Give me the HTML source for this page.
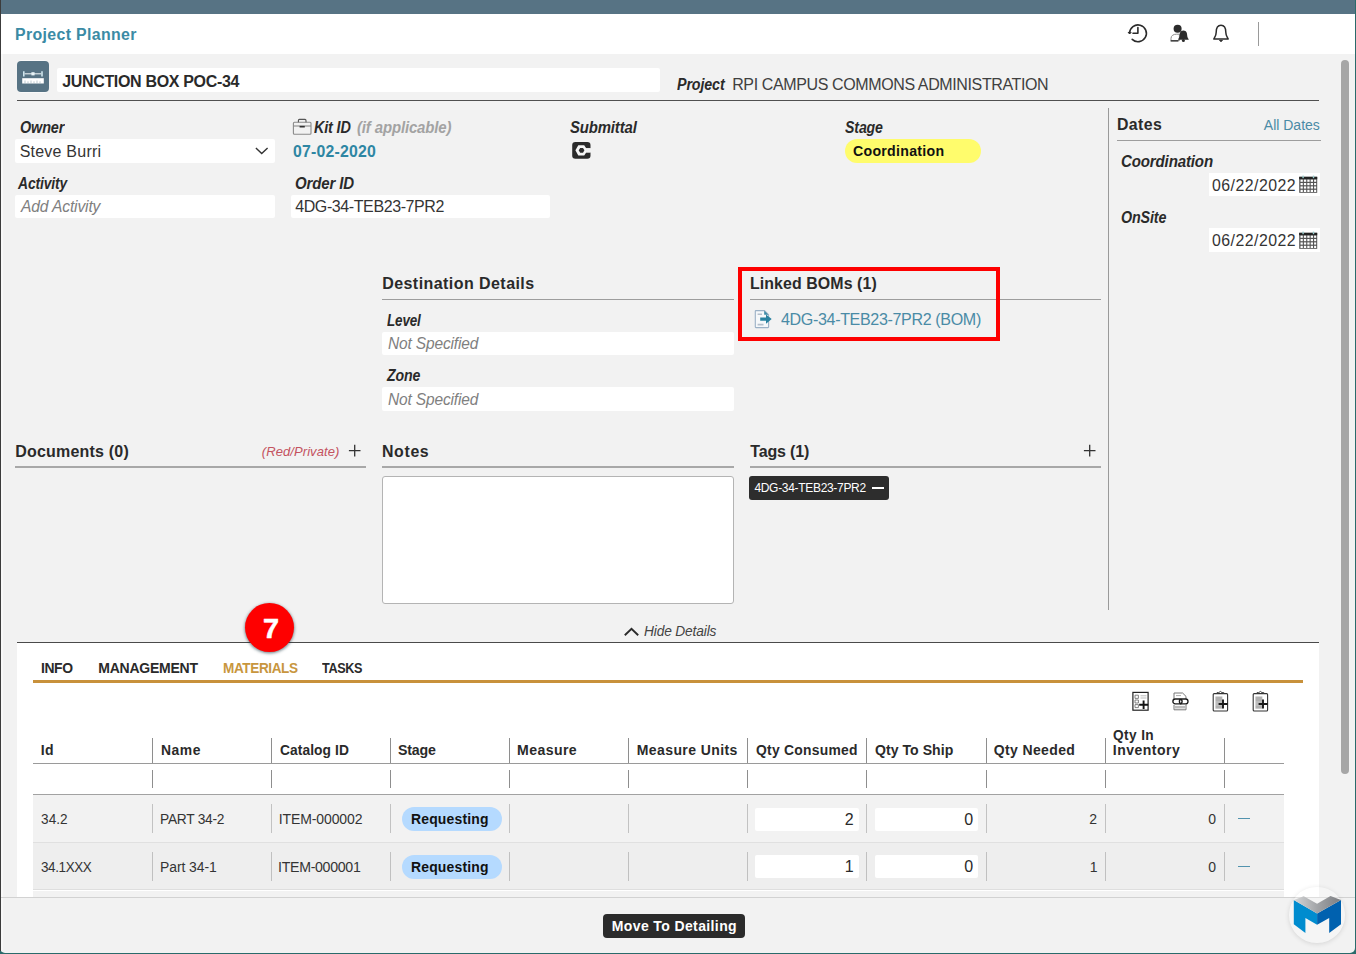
<!DOCTYPE html>
<html lang="en"><head><meta charset="utf-8"><title>Project Planner</title>
<style>
html,body{margin:0;padding:0}
body{width:1356px;height:954px;position:relative;overflow:hidden;background:#2a6b6b;font-family:"Liberation Sans",sans-serif;color:#2a2a2a}
.t{transform-origin:0 0;position:absolute;white-space:pre;line-height:1;z-index:5}
.b{position:absolute;box-sizing:border-box}
.w{background:#fff}
.ln{position:absolute;background:#9d9d9d;height:1px}
.vs{position:absolute;width:1px;background:#c4c4c4}
svg{position:absolute;overflow:visible}

</style></head>
<body>
<!-- frame -->
<div class="b" style="left:0;top:0;width:1355px;height:953px;background:#f2f2f2;border-radius:0 0 5px 5px"></div>
<div class="b" style="left:0;top:0;width:1355px;height:13.5px;background:#577384"></div>
<div class="b w" style="left:0;top:13.5px;width:1355px;height:40.5px"></div>
<div class="b" style="left:0;top:0;width:1px;height:951px;background:#3c3c3c;z-index:9"></div>
<div class="b" style="left:1px;top:54px;width:1.5px;height:896px;background:#f8f8f8"></div>
<!-- scrollbar -->
<div class="b" style="left:1341px;top:60px;width:8px;height:713.5px;background:#a6a6a6;border-radius:4px"></div>
<!-- header divider -->
<div class="b" style="left:1258px;top:22px;width:1px;height:24px;background:#9a9a9a"></div>
<!-- title row -->
<div class="b" style="left:16.5px;top:60px;width:32.5px;height:32.5px;background:#fafafa;border-radius:4.5px"></div>
<div class="b" style="left:17px;top:60.5px;width:31.5px;height:31.5px;background:#577384;border-radius:4px"></div>
<div class="b w" style="left:56.6px;top:68.2px;width:603.8px;height:23.8px;border-radius:2px"></div>
<div class="b" style="left:17px;top:100px;width:1302px;height:1.35px;background:#505050"></div>
<!-- inputs -->
<div class="b w" style="left:15px;top:139px;width:259.5px;height:23.5px;border-radius:2px"></div>
<div class="b w" style="left:15px;top:194.5px;width:259.5px;height:23.5px;border-radius:2px"></div>
<div class="b w" style="left:291px;top:194.5px;width:258.5px;height:23.5px;border-radius:2px"></div>
<!-- stage pill -->
<div class="b" style="left:845.4px;top:138.9px;width:135.4px;height:23.7px;border-radius:12px;background:#fffc6c"></div>
<!-- dates panel -->
<div class="b" style="left:1107.5px;top:108px;width:1px;height:502px;background:#9a9a9a"></div>
<div class="ln" style="left:1117px;top:139.5px;width:203.5px"></div>
<div class="b w" style="left:1209px;top:172.8px;width:111.3px;height:23.7px"></div>
<div class="b w" style="left:1209px;top:228.3px;width:111.3px;height:23.7px"></div>
<!-- destination details -->
<div class="ln" style="left:382px;top:299px;width:351.5px"></div>
<div class="b w" style="left:382px;top:331.5px;width:351.5px;height:23.8px;border-radius:2px"></div>
<div class="b w" style="left:382px;top:387px;width:351.5px;height:24px;border-radius:2px"></div>
<!-- linked boms -->
<div class="ln" style="left:750px;top:299px;width:351px"></div>
<div class="b" style="left:737.7px;top:267px;width:262.3px;height:74.3px;border:4px solid #fe0000;z-index:6"></div>
<!-- documents / notes / tags -->
<div class="ln" style="left:15px;top:466px;width:351px;height:1.5px;background:#a8a8a8"></div>
<div class="ln" style="left:382px;top:466px;width:351.5px;height:1.5px;background:#a8a8a8"></div>
<div class="ln" style="left:750px;top:466px;width:351px;height:1.5px;background:#a8a8a8"></div>
<div class="b w" style="left:382px;top:476.3px;width:351.5px;height:127.5px;border:1px solid #b4b4b4;border-radius:3px"></div>
<div class="b" style="left:749.3px;top:476.2px;width:140.2px;height:23.8px;background:#2d2d2d;border-radius:3px"></div>
<div class="b" style="left:871.6px;top:487px;width:12.4px;height:1.6px;background:#fff;z-index:6"></div>
<!-- bottom panel -->
<div class="b" style="left:17px;top:641.8px;width:1302px;height:1.2px;background:#4a4a4a"></div>
<div class="b w" style="left:17px;top:643px;width:1302px;height:254.5px"></div>
<div class="b" style="left:33px;top:680.3px;width:1270px;height:2.4px;background:#c8913b"></div>
<!-- red circle -->
<div class="b" style="left:245px;top:603.3px;width:49px;height:49px;border-radius:50%;background:#fe0000;box-shadow:0 1px 3px 0.5px rgba(20,50,60,.55);z-index:4"></div>
<!-- table -->
<div class="b" style="left:33px;top:794.8px;width:1250.5px;height:48px;background:#f2f2f2"></div>
<div class="b" style="left:33px;top:843px;width:1250.5px;height:47px;background:#eeeeee"></div>
<div class="b" style="left:33px;top:890.5px;width:1250.5px;height:7px;background:#f2f2f2"></div>
<div class="ln" style="left:33px;top:762.5px;width:1250.5px;height:1.5px;background:#9a9a9a"></div>
<div class="ln" style="left:33px;top:794px;width:1250.5px;height:1.2px;background:#a2a2a2"></div>
<div class="ln" style="left:33px;top:842px;width:1250.5px;background:#e0e0e0"></div>
<div class="ln" style="left:33px;top:889.4px;width:1250.5px;background:#dedede"></div>
<div class="b" style="left:402px;top:807.0px;width:99.5px;height:24px;border-radius:12px;background:#b5daff"></div><div class="b w" style="left:755.3px;top:807.5px;width:103.3px;height:23px;border-radius:2px"></div><div class="b w" style="left:874.5px;top:807.5px;width:103.3px;height:23px;border-radius:2px"></div><div class="b" style="left:1238px;top:817.7px;width:12px;height:1.8px;background:#5293ae"></div><div class="b" style="left:402px;top:854.5px;width:99.5px;height:24px;border-radius:12px;background:#b5daff"></div><div class="b w" style="left:755.3px;top:855px;width:103.3px;height:23px;border-radius:2px"></div><div class="b w" style="left:874.5px;top:855px;width:103.3px;height:23px;border-radius:2px"></div><div class="b" style="left:1238px;top:865.6px;width:12px;height:1.8px;background:#5293ae"></div>
<div class="vs" style="left:152px;top:738.3px;height:24.5px;width:1px;background:#8e8e8e"></div><div class="vs" style="left:152px;top:769.6px;height:18.3px;width:1px;background:#8e8e8e"></div><div class="vs" style="left:152px;top:803.9px;height:29px;width:1px;background:#c2c2c2"></div><div class="vs" style="left:152px;top:851.7px;height:29px;width:1px;background:#c0c0c0"></div><div class="vs" style="left:271px;top:738.3px;height:24.5px;width:1px;background:#8e8e8e"></div><div class="vs" style="left:271px;top:769.6px;height:18.3px;width:1px;background:#8e8e8e"></div><div class="vs" style="left:271px;top:803.9px;height:29px;width:1px;background:#c2c2c2"></div><div class="vs" style="left:271px;top:851.7px;height:29px;width:1px;background:#c0c0c0"></div><div class="vs" style="left:390px;top:738.3px;height:24.5px;width:1px;background:#8e8e8e"></div><div class="vs" style="left:390px;top:769.6px;height:18.3px;width:1px;background:#8e8e8e"></div><div class="vs" style="left:390px;top:803.9px;height:29px;width:1px;background:#c2c2c2"></div><div class="vs" style="left:390px;top:851.7px;height:29px;width:1px;background:#c0c0c0"></div><div class="vs" style="left:509px;top:738.3px;height:24.5px;width:1px;background:#8e8e8e"></div><div class="vs" style="left:509px;top:769.6px;height:18.3px;width:1px;background:#8e8e8e"></div><div class="vs" style="left:509px;top:803.9px;height:29px;width:1px;background:#c2c2c2"></div><div class="vs" style="left:509px;top:851.7px;height:29px;width:1px;background:#c0c0c0"></div><div class="vs" style="left:628px;top:738.3px;height:24.5px;width:1px;background:#8e8e8e"></div><div class="vs" style="left:628px;top:769.6px;height:18.3px;width:1px;background:#8e8e8e"></div><div class="vs" style="left:628px;top:803.9px;height:29px;width:1px;background:#c2c2c2"></div><div class="vs" style="left:628px;top:851.7px;height:29px;width:1px;background:#c0c0c0"></div><div class="vs" style="left:747px;top:738.3px;height:24.5px;width:1px;background:#8e8e8e"></div><div class="vs" style="left:747px;top:769.6px;height:18.3px;width:1px;background:#8e8e8e"></div><div class="vs" style="left:747px;top:803.9px;height:29px;width:1px;background:#c2c2c2"></div><div class="vs" style="left:747px;top:851.7px;height:29px;width:1px;background:#c0c0c0"></div><div class="vs" style="left:866px;top:738.3px;height:24.5px;width:1px;background:#8e8e8e"></div><div class="vs" style="left:866px;top:769.6px;height:18.3px;width:1px;background:#8e8e8e"></div><div class="vs" style="left:866px;top:803.9px;height:29px;width:1px;background:#c2c2c2"></div><div class="vs" style="left:866px;top:851.7px;height:29px;width:1px;background:#c0c0c0"></div><div class="vs" style="left:986px;top:738.3px;height:24.5px;width:1px;background:#8e8e8e"></div><div class="vs" style="left:986px;top:769.6px;height:18.3px;width:1px;background:#8e8e8e"></div><div class="vs" style="left:986px;top:803.9px;height:29px;width:1px;background:#c2c2c2"></div><div class="vs" style="left:986px;top:851.7px;height:29px;width:1px;background:#c0c0c0"></div><div class="vs" style="left:1105px;top:738.3px;height:24.5px;width:1px;background:#8e8e8e"></div><div class="vs" style="left:1105px;top:769.6px;height:18.3px;width:1px;background:#8e8e8e"></div><div class="vs" style="left:1105px;top:803.9px;height:29px;width:1px;background:#c2c2c2"></div><div class="vs" style="left:1105px;top:851.7px;height:29px;width:1px;background:#c0c0c0"></div><div class="vs" style="left:1224px;top:738.3px;height:24.5px;width:1px;background:#8e8e8e"></div><div class="vs" style="left:1224px;top:769.6px;height:18.3px;width:1px;background:#8e8e8e"></div><div class="vs" style="left:1224px;top:803.9px;height:29px;width:1px;background:#c2c2c2"></div><div class="vs" style="left:1224px;top:851.7px;height:29px;width:1px;background:#c0c0c0"></div>
<!-- footer -->
<div class="b" style="left:1px;top:897.1px;width:1354px;height:1.3px;background:#d2d2d2"></div>
<div class="b" style="left:603px;top:914px;width:141.5px;height:24px;background:#2b2b2b;border-radius:4px"></div>
<!-- header icons -->
<svg style="left:1126px;top:22px" width="24" height="24" viewBox="0 0 24 24" fill="none" stroke="#2b2b2b" stroke-width="1.6" stroke-linecap="round" stroke-linejoin="round">
<path d="M3.6 11.2 A8.4 8.4 0 1 1 6.2 17.4"/><path d="M11.9 5.6 V11.2 H7"/><path d="M2.3 10.3 L3.6 11.5 L5 10.5" stroke-width="1.1"/></svg>
<svg style="left:1168px;top:22px" width="24" height="24" viewBox="0 0 24 24">
<circle cx="9.6" cy="6.7" r="4" fill="#2b2b2b"/>
<path d="M3 18.6 V16.4 C3 13.4 5.6 12.2 8.6 12.2 H11.4 V18.6 Z" fill="#fff" stroke="#8a8a8a" stroke-width="1"/>
<path d="M2.6 18.9 H10.4" stroke="#2b2b2b" stroke-width="1.3"/>
<path d="M15.4 8.4 C12.2 8.4 11.6 11.4 11.6 13.6 C11.6 15.6 10.4 16.6 10 17.8 H20.8 C20.4 16.6 19.2 15.6 19.2 13.6 C19.2 11.4 18.6 8.4 15.4 8.4 Z" fill="#2b2b2b"/>
<circle cx="15.4" cy="18.6" r="1.5" fill="#2b2b2b"/></svg>
<svg style="left:1209px;top:22px" width="24" height="24" viewBox="0 0 24 24" fill="none" stroke="#2b2b2b" stroke-width="1.5" stroke-linejoin="round">
<path d="M12 3.2 C8.2 3.2 7.2 6.6 7.2 10.2 C7.2 13.8 5.4 15.4 4.8 17 H19.2 C18.6 15.4 16.8 13.8 16.8 10.2 C16.8 6.6 15.8 3.2 12 3.2 Z"/>
<path d="M10.6 18.4 A1.5 1.5 0 0 0 13.4 18.4 Z" fill="#2b2b2b" stroke-width="1"/></svg>
<!-- title icon -->
<svg style="left:17px;top:60.5px;z-index:3" width="32" height="32" viewBox="0 0 32 32">
<rect x="5.2" y="17.2" width="21.6" height="5.3" fill="#fff"/>
<g stroke="#9fb2bd" stroke-width="0.7"><path d="M8 19.5v3M11 20.3v2.2M14 19.5v3M17 20.3v2.2M20 19.5v3M23 20.3v2.2"/></g>
<path d="M6.8 10.2 V15.4 M25 10.2 V15.4" stroke="#cfe6ee" stroke-width="1.6"/>
<path d="M7.6 12.8 H24.2" stroke="#e8eef1" stroke-width="1.1"/>
<rect x="14.4" y="11.2" width="3.2" height="3.2" fill="#e8f3f7"/></svg>
<!-- owner chevron -->
<svg style="left:254px;top:145px" width="16" height="12" viewBox="0 0 16 12" fill="none" stroke="#333" stroke-width="1.4"><path d="M1.9 3 L7.7 8.6 L13.6 3"/></svg>
<!-- briefcase -->
<svg style="left:291px;top:117px" width="24" height="20" viewBox="0 0 24 20" fill="none" stroke="#8a8a8a" stroke-width="1.1">
<rect x="2.4" y="5.3" width="17.6" height="12" rx="1"/><path d="M7.4 5.2 V3.4 Q7.4 2.4 8.4 2.4 H14 Q15 2.4 15 3.4 V5.2" stroke="#555"/><path d="M2.4 9 H20"/><path d="M8.6 9.7 H13.8" stroke="#333" stroke-width="1.6"/></svg>
<!-- submittal icon -->
<svg style="left:570px;top:140px" width="24" height="20" viewBox="0 0 24 20">
<rect x="2.2" y="1.9" width="18.3" height="16.8" rx="3.2" fill="#2b2b2b"/>
<path d="M5.4 10.3 L8.3 5.3 H14.2 L16.2 8.2 H20.6 V12.4 H16.2 L14.2 15.6 H8.3 Z" fill="#f6f6f6"/>
<path d="M16 8.2 H21 V12.4 H16 Z" fill="#f2f2f2"/>
<path d="M8.7 10.3 L10.2 7.9 H13 L14.4 10.3 L13 12.8 H10.2 Z" fill="#2b2b2b"/></svg>
<!-- link bom icon -->
<svg style="left:752px;top:308px" width="22" height="22" viewBox="0 0 22 22" fill="none">
<path d="M3.3 3.2 Q3.3 2.6 3.9 2.6 H12.4 L16.6 6.8 V19 Q16.6 19.6 16 19.6 H3.9 Q3.3 19.6 3.3 19 Z" stroke="#9bb1c6" stroke-width="1.1" fill="#f6f8fa"/>
<path d="M5.6 6.2 H10 M5.6 16.6 H11.5" stroke="#b4bfcc" stroke-width="1.6"/>
<path d="M12.2 2.8 V6.8 H16.4 Z" fill="#3d8aa5"/>
<path d="M8.2 9.6 H14 V6.6 L19.7 11.1 L14 15.7 V12.7 H8.2 Z" fill="#2a82a0"/></svg>
<!-- plus signs -->
<svg style="left:347px;top:443px" width="15" height="15" viewBox="0 0 15 15" stroke="#333" stroke-width="1.3"><path d="M7.7 1.8 V13.4 M1.9 7.6 H13.5"/></svg>
<svg style="left:1081.6px;top:443px" width="15" height="15" viewBox="0 0 15 15" stroke="#333" stroke-width="1.3"><path d="M7.7 1.8 V13.4 M1.9 7.6 H13.5"/></svg>
<!-- hide details chevron -->
<svg style="left:622px;top:625px" width="19" height="13" viewBox="0 0 19 13" fill="none" stroke="#2b2b2b" stroke-width="1.9"><path d="M2.8 10.2 L9.5 3.8 L16.2 10.2"/></svg>
<!-- calendars -->
<svg style="left:1298px;top:175px" width="21" height="19" viewBox="0 0 21 19"><rect x="1.2" y="1.8" width="18" height="16" fill="#555"/>
<rect x="1.2" y="1.8" width="18" height="2.4" fill="#222"/>
<g fill="#fff"><rect x="2.5" y="4.6" width="2.3" height="2.2"/><rect x="5.9" y="4.6" width="2.3" height="2.2"/><rect x="9.3" y="4.6" width="2.3" height="2.2"/><rect x="12.7" y="4.6" width="2.3" height="2.2"/><rect x="16.1" y="4.6" width="2.1" height="2.2"/>
<rect x="2.5" y="8" width="2.3" height="2.2"/><rect x="5.9" y="8" width="2.3" height="2.2"/><rect x="9.3" y="8" width="2.3" height="2.2"/><rect x="12.7" y="8" width="2.3" height="2.2"/><rect x="16.1" y="8" width="2.1" height="2.2"/>
<rect x="2.5" y="11.4" width="2.3" height="2.2"/><rect x="5.9" y="11.4" width="2.3" height="2.2"/><rect x="9.3" y="11.4" width="2.3" height="2.2"/><rect x="12.7" y="11.4" width="2.3" height="2.2"/><rect x="16.1" y="11.4" width="2.1" height="2.2"/>
<rect x="2.5" y="14.8" width="2.3" height="2.2"/><rect x="5.9" y="14.8" width="2.3" height="2.2"/><rect x="9.3" y="14.8" width="2.3" height="2.2"/><rect x="12.7" y="14.8" width="2.3" height="2.2"/><rect x="16.1" y="14.8" width="2.1" height="2.2"/></g>
<rect x="4.4" y="0.6" width="1.4" height="2.6" fill="#9cc"/><rect x="14.8" y="0.6" width="1.4" height="2.6" fill="#9cc"/></svg>
<svg style="left:1298px;top:230.5px" width="21" height="19" viewBox="0 0 21 19"><rect x="1.2" y="1.8" width="18" height="16" fill="#555"/>
<rect x="1.2" y="1.8" width="18" height="2.4" fill="#222"/>
<g fill="#fff"><rect x="2.5" y="4.6" width="2.3" height="2.2"/><rect x="5.9" y="4.6" width="2.3" height="2.2"/><rect x="9.3" y="4.6" width="2.3" height="2.2"/><rect x="12.7" y="4.6" width="2.3" height="2.2"/><rect x="16.1" y="4.6" width="2.1" height="2.2"/>
<rect x="2.5" y="8" width="2.3" height="2.2"/><rect x="5.9" y="8" width="2.3" height="2.2"/><rect x="9.3" y="8" width="2.3" height="2.2"/><rect x="12.7" y="8" width="2.3" height="2.2"/><rect x="16.1" y="8" width="2.1" height="2.2"/>
<rect x="2.5" y="11.4" width="2.3" height="2.2"/><rect x="5.9" y="11.4" width="2.3" height="2.2"/><rect x="9.3" y="11.4" width="2.3" height="2.2"/><rect x="12.7" y="11.4" width="2.3" height="2.2"/><rect x="16.1" y="11.4" width="2.1" height="2.2"/>
<rect x="2.5" y="14.8" width="2.3" height="2.2"/><rect x="5.9" y="14.8" width="2.3" height="2.2"/><rect x="9.3" y="14.8" width="2.3" height="2.2"/><rect x="12.7" y="14.8" width="2.3" height="2.2"/><rect x="16.1" y="14.8" width="2.1" height="2.2"/></g>
<rect x="4.4" y="0.6" width="1.4" height="2.6" fill="#9cc"/><rect x="14.8" y="0.6" width="1.4" height="2.6" fill="#9cc"/></svg>
<!-- toolbar icons -->
<svg style="left:1131px;top:690px" width="20" height="22" viewBox="0 0 20 22" fill="none" stroke="#3a3a3a" stroke-width="1">
<rect x="1.9" y="2.4" width="15.2" height="17.8" stroke="#222" stroke-width="1.2"/><path d="M4 5.2h3.4v3.2H4zM4 10h3.4v3H4zM4 14.6h3.4v3H4z" stroke-width="0.8" stroke="#666"/><path d="M9.5 5.8h6M9.5 8h6" stroke="#aaa" stroke-width="0.8"/>
<path d="M12.6 10.4 V19 M8.2 14.7 H17.2" stroke="#111" stroke-width="1.9"/></svg>
<svg style="left:1170px;top:690px" width="20" height="22" viewBox="0 0 20 22" fill="none" stroke="#444" stroke-width="1">
<path d="M4 9 V3 H12.6 L16 6.4 V9" stroke="#777"/><path d="M4 14.8 V19.8 H16 V14.8" stroke="#777"/><path d="M6 5.6h5" stroke="#aaa"/><path d="M5 17.2h10" stroke="#bbb" stroke-width="2.6"/>
<rect x="2.9" y="9" width="9.2" height="4.8" rx="2.4" stroke="#1c1c1c" stroke-width="1.35"/><rect x="9.4" y="9" width="8.6" height="4.8" rx="2.4" stroke="#1c1c1c" stroke-width="1.35"/></svg>
<svg style="left:1210px;top:690px" width="20" height="23" viewBox="0 0 20 23" fill="none" stroke="#444" stroke-width="1"><rect x="3.2" y="3.6" width="14.4" height="17.4" rx="1" stroke="#333" stroke-width="1.1"/><path d="M7 3.6 V2.6 H8.8 Q10.4 0.2 12 2.6 H13.8 V3.6" stroke="#444"/>
<rect x="5.4" y="6.4" width="7" height="12.4" fill="#bdbdbd" stroke="none"/><path d="M5.8 8h6M5.8 10h6M5.8 17h6" stroke="#999" stroke-width="0.7"/>
<path d="M13 9.6 V18.4 M8.6 14 H17.6" stroke="#1a1a1a" stroke-width="1.9"/></svg>
<svg style="left:1250px;top:690px" width="20" height="23" viewBox="0 0 20 23" fill="none" stroke="#444" stroke-width="1"><rect x="3.2" y="3.6" width="14.4" height="17.4" rx="1" stroke="#333" stroke-width="1.1"/><path d="M7 3.6 V2.6 H8.8 Q10.4 0.2 12 2.6 H13.8 V3.6" stroke="#444"/>
<rect x="5.4" y="6.4" width="7" height="12.4" fill="#bdbdbd" stroke="none"/><path d="M5.8 8h6M5.8 10h6M5.8 17h6" stroke="#999" stroke-width="0.7"/>
<path d="M13 9.6 V18.4 M8.6 14 H17.6" stroke="#1a1a1a" stroke-width="1.9"/></svg>
<!-- M logo -->
<div class="b" style="left:1289.3px;top:887.3px;width:55.6px;height:55.6px;border-radius:50%;background:rgba(255,255,255,.28);box-shadow:0 1px 5px rgba(0,0,0,.12);z-index:7"></div>
<svg style="left:1289px;top:890px;z-index:8" width="56" height="48" viewBox="1289 890 56 48">
<defs><linearGradient id="mg" x1="0" y1="0" x2="1" y2="0"><stop offset="0" stop-color="#d6d7d8"/><stop offset="0.5" stop-color="#a2a4a7"/><stop offset="1" stop-color="#7c7e82"/></linearGradient></defs>
<path d="M1293.8 900 L1317.1 913.4 L1317.1 924.7 L1305.4 918 L1305.4 933.1 L1293.8 924.3 Z" fill="#008ccf"/>
<path d="M1317.1 913.4 L1341 900 L1341 924.3 L1329.2 933.1 L1329.2 918 L1317.1 924.7 Z" fill="#0061af"/>
<path d="M1293.8 900 L1303.7 896.2 L1317.1 903.8 L1330.5 896 L1341 900 L1317.1 913.4 Z" fill="url(#mg)"/></svg>

<span class="t" style="left:15.2px;top:27px;font-size:16px;font-weight:700;color:#3b8ba5;letter-spacing:0.36px;transform:scaleX(0.992);">Project Planner</span>
<span class="t" style="left:62.2px;top:74px;font-size:16px;font-weight:700;letter-spacing:-0.33px;">JUNCTION BOX POC-34</span>
<span class="t" style="left:676.7px;top:77px;font-size:16px;font-weight:700;font-style:italic;letter-spacing:-0.15px;transform:scaleX(0.893);">Project</span>
<span class="t" style="left:732.2px;top:77px;font-size:16px;color:#404040;letter-spacing:-0.38px;">RPI CAMPUS COMMONS ADMINISTRATION</span>
<span class="t" style="left:19.7px;top:120px;font-size:16px;font-weight:700;font-style:italic;letter-spacing:-0.15px;transform:scaleX(0.900);">Owner</span>
<span class="t" style="left:19.7px;top:144px;font-size:16px;color:#343434;letter-spacing:0.22px;">Steve Burri</span>
<span class="t" style="left:18.2px;top:176px;font-size:16px;font-weight:700;font-style:italic;letter-spacing:-0.15px;transform:scaleX(0.866);">Activity</span>
<span class="t" style="left:21.2px;top:199px;font-size:16px;font-style:italic;color:#808080;letter-spacing:-0.15px;transform:scaleX(0.976);">Add Activity</span>
<span class="t" style="left:314.2px;top:120px;font-size:16px;font-weight:700;font-style:italic;letter-spacing:-0.15px;transform:scaleX(0.898);">Kit ID</span>
<span class="t" style="left:357.2px;top:120px;font-size:16px;font-weight:700;font-style:italic;color:#a3a3a3;letter-spacing:-0.15px;transform:scaleX(0.935);">(if applicable)</span>
<span class="t" style="left:293.2px;top:144px;font-size:16px;font-weight:700;color:#2e86a3;letter-spacing:0.22px;transform:scaleX(0.988);">07-02-2020</span>
<span class="t" style="left:295.2px;top:176px;font-size:16px;font-weight:700;font-style:italic;letter-spacing:-0.15px;transform:scaleX(0.937);">Order ID</span>
<span class="t" style="left:295.2px;top:199px;font-size:16px;color:#343434;letter-spacing:-0.40px;">4DG-34-TEB23-7PR2</span>
<span class="t" style="left:570.2px;top:120px;font-size:16px;font-weight:700;font-style:italic;letter-spacing:-0.15px;transform:scaleX(0.932);">Submittal</span>
<span class="t" style="left:844.7px;top:120px;font-size:16px;font-weight:700;font-style:italic;letter-spacing:-0.15px;transform:scaleX(0.884);">Stage</span>
<span class="t" style="left:853.3px;top:144px;font-size:14px;font-weight:700;color:#111;letter-spacing:0.27px;transform:scaleX(1.011);">Coordination</span>
<span class="t" style="left:1117.2px;top:117px;font-size:16px;font-weight:700;letter-spacing:0.40px;transform:scaleX(0.991);">Dates</span>
<span class="t" style="left:1263.8px;top:118px;font-size:14px;color:#4a8ba6;">All Dates</span>
<span class="t" style="left:1121.2px;top:154px;font-size:16px;font-weight:700;font-style:italic;letter-spacing:-0.15px;transform:scaleX(0.941);">Coordination</span>
<span class="t" style="left:1211.7px;top:178px;font-size:16px;color:#343434;letter-spacing:0.47px;transform:scaleX(0.991);">06/22/2022</span>
<span class="t" style="left:1121.2px;top:210px;font-size:16px;font-weight:700;font-style:italic;letter-spacing:-0.15px;transform:scaleX(0.894);">OnSite</span>
<span class="t" style="left:1211.7px;top:233px;font-size:16px;color:#343434;letter-spacing:0.47px;transform:scaleX(0.991);">06/22/2022</span>
<span class="t" style="left:382.2px;top:276px;font-size:16px;font-weight:700;letter-spacing:0.44px;">Destination Details</span>
<span class="t" style="left:386.7px;top:313px;font-size:16px;font-weight:700;font-style:italic;letter-spacing:-0.15px;transform:scaleX(0.839);">Level</span>
<span class="t" style="left:387.7px;top:336px;font-size:16px;font-style:italic;color:#808080;letter-spacing:-0.15px;transform:scaleX(0.968);">Not Specified</span>
<span class="t" style="left:387.2px;top:368px;font-size:16px;font-weight:700;font-style:italic;letter-spacing:-0.15px;transform:scaleX(0.882);">Zone</span>
<span class="t" style="left:387.7px;top:392px;font-size:16px;font-style:italic;color:#808080;letter-spacing:-0.15px;transform:scaleX(0.968);">Not Specified</span>
<span class="t" style="left:749.7px;top:276px;font-size:16px;font-weight:700;letter-spacing:0.09px;transform:scaleX(0.994);">Linked BOMs (1)</span>
<span class="t" style="left:781.2px;top:312px;font-size:16px;color:#4a8ba6;letter-spacing:-0.36px;transform:scaleX(1.005);">4DG-34-TEB23-7PR2 (BOM)</span>
<span class="t" style="left:15.2px;top:444px;font-size:16px;font-weight:700;letter-spacing:0.20px;">Documents (0)</span>
<span class="t" style="left:261.8px;top:445px;font-size:13px;font-style:italic;color:#c4535f;letter-spacing:0.08px;">(Red/Private)</span>
<span class="t" style="left:382.2px;top:444px;font-size:16px;font-weight:700;letter-spacing:0.65px;transform:scaleX(0.992);">Notes</span>
<span class="t" style="left:750.2px;top:444px;font-size:16px;font-weight:700;letter-spacing:-0.14px;">Tags (1)</span>
<span class="t" style="left:754.4px;top:482px;font-size:12px;color:#fff;letter-spacing:-0.31px;">4DG-34-TEB23-7PR2</span>
<span class="t" style="left:644.3px;top:624px;font-size:14px;font-style:italic;color:#444;letter-spacing:-0.15px;transform:scaleX(0.981);">Hide Details</span>
<span class="t" style="left:263.1px;top:616px;font-size:27px;font-weight:700;color:#fff;-webkit-text-stroke:0.5px #fff;transform:scaleX(1.07);margin-left:-0.6px;">7</span>
<span class="t" style="left:40.8px;top:661px;font-size:14px;font-weight:700;letter-spacing:-0.40px;transform:scaleX(0.994);">INFO</span>
<span class="t" style="left:98.3px;top:661px;font-size:14px;font-weight:700;letter-spacing:-0.24px;">MANAGEMENT</span>
<span class="t" style="left:222.8px;top:661px;font-size:14px;font-weight:700;color:#c8963e;letter-spacing:-0.40px;transform:scaleX(0.969);">MATERIALS</span>
<span class="t" style="left:322.3px;top:661px;font-size:14px;font-weight:700;letter-spacing:-0.40px;transform:scaleX(0.902);">TASKS</span>
<span class="t" style="left:40.8px;top:743px;font-size:14px;font-weight:700;letter-spacing:0.20px;">Id</span>
<span class="t" style="left:160.8px;top:743px;font-size:14px;font-weight:700;letter-spacing:0.53px;transform:scaleX(0.991);">Name</span>
<span class="t" style="left:279.8px;top:743px;font-size:14px;font-weight:700;letter-spacing:0.09px;transform:scaleX(0.983);">Catalog ID</span>
<span class="t" style="left:397.8px;top:743px;font-size:14px;font-weight:700;letter-spacing:-0.15px;transform:scaleX(1.011);">Stage</span>
<span class="t" style="left:517.3px;top:743px;font-size:14px;font-weight:700;letter-spacing:0.40px;transform:scaleX(1.007);">Measure</span>
<span class="t" style="left:636.8px;top:743px;font-size:14px;font-weight:700;letter-spacing:0.40px;">Measure Units</span>
<span class="t" style="left:755.8px;top:743px;font-size:14px;font-weight:700;letter-spacing:0.27px;transform:scaleX(0.990);">Qty Consumed</span>
<span class="t" style="left:874.8px;top:743px;font-size:14px;font-weight:700;letter-spacing:0.04px;transform:scaleX(1.005);">Qty To Ship</span>
<span class="t" style="left:993.8px;top:743px;font-size:14px;font-weight:700;letter-spacing:0.36px;">Qty Needed</span>
<span class="t" style="left:1112.8px;top:728px;font-size:14px;font-weight:700;letter-spacing:0.40px;transform:scaleX(0.976);">Qty In</span>
<span class="t" style="left:1112.8px;top:743px;font-size:14px;font-weight:700;letter-spacing:0.50px;">Inventory</span>
<span class="t" style="left:41.3px;top:812px;font-size:14px;color:#343434;letter-spacing:0.07px;transform:scaleX(0.971);">34.2</span>
<span class="t" style="left:160.3px;top:812px;font-size:14px;color:#343434;letter-spacing:-0.27px;transform:scaleX(0.982);">PART 34-2</span>
<span class="t" style="left:278.8px;top:812px;font-size:14px;color:#343434;letter-spacing:-0.12px;">ITEM-000002</span>
<span class="t" style="left:410.8px;top:812px;font-size:14px;font-weight:700;color:#111;letter-spacing:0.18px;transform:scaleX(0.995);">Requesting</span>
<span class="t" style="left:844.7px;top:812px;font-size:16px;">2</span>
<span class="t" style="left:964.2px;top:812px;font-size:16px;">0</span>
<span class="t" style="left:1089.3px;top:812px;font-size:14px;color:#343434;">2</span>
<span class="t" style="left:1208.3px;top:812px;font-size:14px;color:#343434;">0</span>
<span class="t" style="left:41.3px;top:860px;font-size:14px;color:#343434;letter-spacing:-0.40px;transform:scaleX(0.962);">34.1XXX</span>
<span class="t" style="left:160.3px;top:860px;font-size:14px;color:#343434;letter-spacing:-0.05px;transform:scaleX(0.993);">Part 34-1</span>
<span class="t" style="left:277.8px;top:860px;font-size:14px;color:#343434;letter-spacing:-0.30px;transform:scaleX(1.012);">ITEM-000001</span>
<span class="t" style="left:410.8px;top:860px;font-size:14px;font-weight:700;color:#111;letter-spacing:0.18px;transform:scaleX(0.995);">Requesting</span>
<span class="t" style="left:844.7px;top:859px;font-size:16px;">1</span>
<span class="t" style="left:964.2px;top:859px;font-size:16px;">0</span>
<span class="t" style="left:1089.8px;top:860px;font-size:14px;color:#343434;">1</span>
<span class="t" style="left:1208.3px;top:860px;font-size:14px;color:#343434;">0</span>
<span class="t" style="left:611.8px;top:919px;font-size:14px;font-weight:700;color:#fff;letter-spacing:0.38px;">Move To Detailing</span>
</body></html>
